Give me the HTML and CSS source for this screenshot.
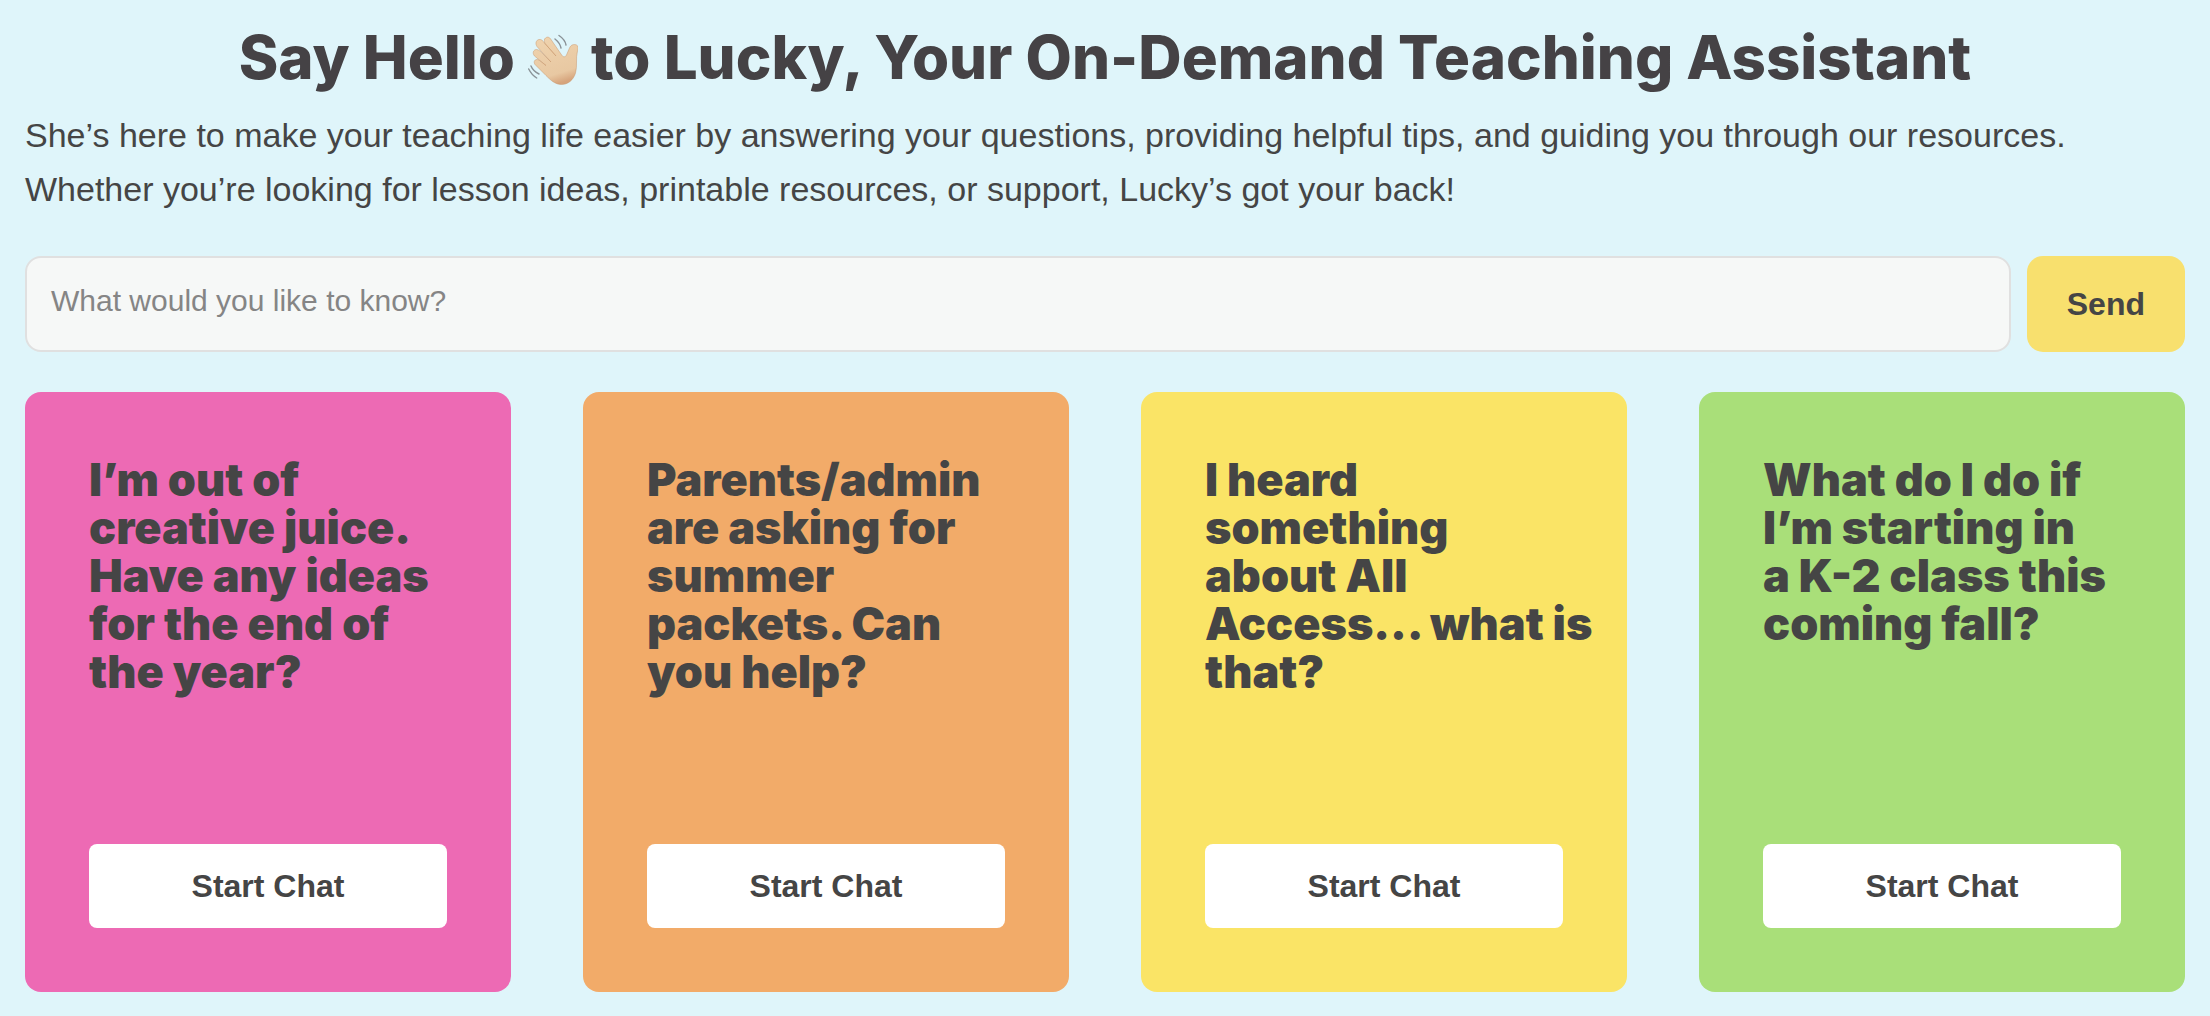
FILE: index.html
```html
<!DOCTYPE html>
<html lang="en">
<head>
    <meta charset="UTF-8">
    <meta name="viewport" content="width=device-width, initial-scale=1.0">
    <title>Lucky, Your On-Demand Teaching Assistant</title>
    <link rel="stylesheet" href="styles.css">
</head>
<body>

    <main class="assistant">
        <h1 class="title">
            Say Hello
            <svg class="wave" viewBox="0 0 50 51" aria-hidden="true">
                <defs>
                    <linearGradient id="skin" x1="0.2" y1="0" x2="0.5" y2="1">
                        <stop offset="0" stop-color="#efd3ae"/>
                        <stop offset="0.8" stop-color="#e8c8a2"/>
                        <stop offset="1" stop-color="#d6a47c"/>
                    </linearGradient>
                </defs>
                <g fill="none" stroke="#8a9297" stroke-width="1.4" stroke-linecap="round">
                    <path d="M27 5q5 4 6 9M31 1.500q6 4 7 9.500M3 32q2 5 8 8M0.700 35q3 6 8 9"/>
                </g>
                <path fill="url(#skin)" stroke="#c9966c" stroke-width="0.5" d="M17.500 4C20 2 22 3.500 24 7L34 21.500C35.500 23.500 37.500 23 38.500 21L41.500 14C43 10.500 46 10 48.500 11C50.500 12 50.500 14 49.500 17C47.500 24 49.500 32 47.500 39C45.500 46 40 50.500 33.500 50.500C27 50.500 22.500 46 18 41.500L8 31.500C5 29 6 25.500 9 25.500C11 25.500 14.500 29 18 31.500L6.500 22C4 19 5.500 15.500 8.500 15.500C11 15.500 13 18 15 20L23 28L9 12.500C7 9.500 8 6 11 5.500C13.500 5 15 7 16.500 9L28 22L17 9.500C16 7 16 5 17.500 4Z"/>
            </svg>
            to Lucky, Your On-Demand Teaching Assistant
        </h1>
        <p class="intro">She’s here to make your teaching life easier by answering your questions, providing helpful tips, and guiding you through our resources.<br>Whether you’re looking for lesson ideas, printable resources, or support, Lucky’s got your back!</p>

        <form class="ask">
            <textarea class="ask-input" rows="1" aria-label="What would you like to know?" placeholder="What would you like to know?"></textarea>
            <button class="ask-send" type="submit">Send</button>
        </form>

        <div class="cards">
            <section class="card pink">
                <h2 class="card-text">I’m out of<br>creative juice.<br>Have any ideas<br>for the end of<br>the year?</h2>
                <button class="card-button" type="button">Start Chat</button>
            </section>
            <section class="card orange">
                <h2 class="card-text">Parents/admin<br>are asking for<br>summer<br>packets. Can<br>you help?</h2>
                <button class="card-button" type="button">Start Chat</button>
            </section>
            <section class="card yellow">
                <h2 class="card-text">I heard<br>something<br>about All<br>Access… what is<br>that?</h2>
                <button class="card-button" type="button">Start Chat</button>
            </section>
            <section class="card green">
                <h2 class="card-text">What do I do if<br>I’m starting in<br>a K-2 class this<br>coming fall?</h2>
                <button class="card-button" type="button">Start Chat</button>
            </section>
        </div>
    </main>

</body>
</html>
```

FILE: styles.css
```css
* {
    box-sizing: border-box;
}

body {
    margin: 0;
    background-color: #dff5fa;
    color: #454545;
    font-family: "Liberation Sans", Arial, sans-serif;
}

.assistant {
    padding: 22px 25px 24px;
}

.title {
    margin: 0;
    font-family: Inter, sans-serif;
    font-size: 60px;
    font-weight: 800;
    line-height: 70px;
    text-align: center;
    color: #454245;
}

.wave {
    width: 50px;
    height: 51px;
    vertical-align: -6px;
}

.intro {
    margin: 16px 0 40px;
    font-size: 34px;
    line-height: 54px;
}

.ask {
    display: flex;
    gap: 16px;
    margin-bottom: 40px;
}

.ask-input {
    flex: 1;
    height: 96px;
    padding: 24px;
    border: 2px solid #e0e0e0;
    border-radius: 16px;
    background-color: #f6f8f7;
    color: #454545;
    font-family: inherit;
    font-size: 30px;
    line-height: 38px;
    resize: none;
}

.ask-input::placeholder {
    color: #858585;
}

.ask-send {
    padding: 0 40px;
    border: none;
    border-radius: 16px;
    background-color: #f8e06e;
    color: #454545;
    font-family: inherit;
    font-size: 32px;
    font-weight: bold;
    cursor: pointer;
}

/* Suggested questions */
.cards {
    display: grid;
    grid-template-columns: repeat(4, minmax(0, 1fr));
    gap: 72px;
}

.card {
    display: flex;
    flex-direction: column;
    justify-content: space-between;
    min-height: 600px;
    padding: 64px;
    border-radius: 16px;
}

.card-text {
    margin: 0;
    font-family: Inter, sans-serif;
    font-size: 45px;
    font-weight: 900;
    line-height: 48px;
    white-space: nowrap;
}

.card-button {
    padding: 24px;
    border: none;
    border-radius: 8px;
    background-color: white;
    color: #454545;
    font-family: inherit;
    font-size: 32px;
    font-weight: bold;
    line-height: 36px;
    cursor: pointer;
}

.pink {
    background-color: #ed6ab4;
}

.orange {
    background-color: #f2ab69;
}

.yellow {
    background-color: #fae466;
}

.green {
    background-color: #a9df79;
}
```
